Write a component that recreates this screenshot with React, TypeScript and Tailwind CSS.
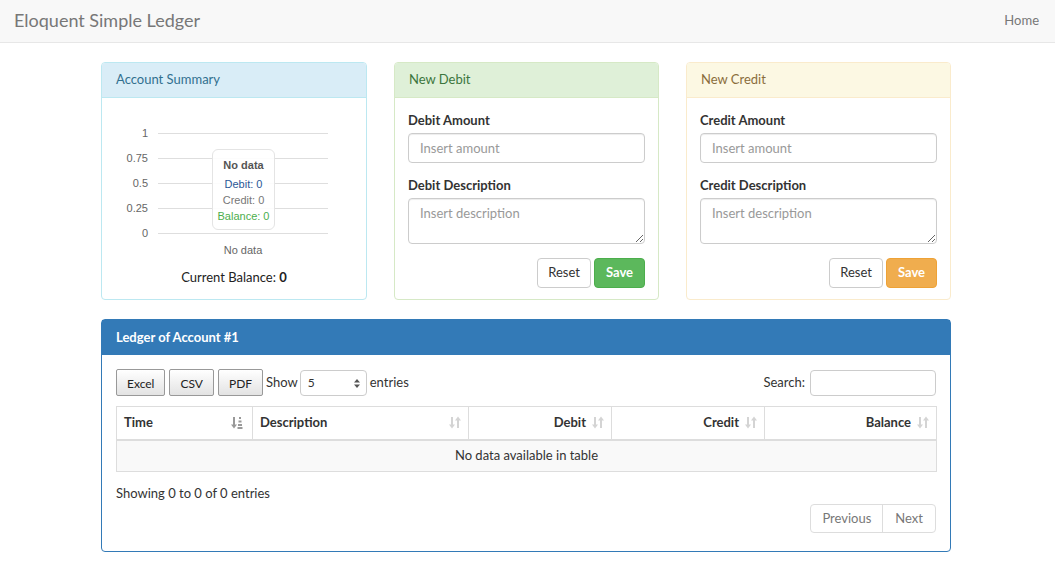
import React from "react";

const font = { fontFamily: "Lato, 'Open Sans', sans-serif" };

function SortBoth() {
  return (
    <svg width="12" height="13" viewBox="0 0 12 13" className="shrink-0">
      <g fill="#d4d4d4">
        <rect x="2" y="1" width="2" height="9" />
        <path d="M0 8.5 L6 8.5 L3 12.5 Z" />
        <rect x="8" y="3" width="2" height="9" />
        <path d="M6 4.5 L12 4.5 L9 0.5 Z" />
      </g>
    </svg>
  );
}

function SortAsc() {
  return (
    <svg width="13" height="13" viewBox="0 0 13 13" className="shrink-0">
      <g fill="#999">
        <rect x="2" y="1" width="2" height="9" />
        <path d="M0 8.5 L6 8.5 L3 12.5 Z" />
        <rect x="8" y="1" width="2" height="2" />
        <rect x="7.5" y="4.5" width="3" height="2" />
        <rect x="7" y="8" width="4" height="2" />
        <rect x="6.5" y="11" width="5" height="2" />
      </g>
    </svg>
  );
}

function SummaryChart() {
  const ticks = [
    { label: "1", y: 35 },
    { label: "0.75", y: 60 },
    { label: "0.5", y: 85 },
    { label: "0.25", y: 110 },
    { label: "0", y: 135 },
  ];
  return (
    <div className="relative h-[170px]">
      <svg width="264" height="170" className="block">
        {ticks.map((t) => (
          <g key={t.label}>
            <line x1="56" x2="226" y1={t.y + 0.5} y2={t.y + 0.5} stroke="#dedede" />
            <text
              x="46"
              y={t.y + 4}
              textAnchor="end"
              fontSize="11"
              fill="#666"
              fontFamily="'Liberation Sans', Arial, sans-serif"
            >
              {t.label}
            </text>
          </g>
        ))}
        <text
          x="141"
          y="156"
          textAnchor="middle"
          fontSize="11"
          fill="#666"
          fontFamily="'Liberation Sans', Arial, sans-serif"
        >
          No data
        </text>
      </svg>
      <div
        className="absolute left-[110px] top-[51px] w-[63px] h-[81px] rounded-[6px] border border-[#e4e4e4] bg-white/90 flex flex-col items-center pt-[7px] text-[11px] leading-[16px]"
        style={{ fontFamily: "'Liberation Sans', Arial, sans-serif" }}
      >
        <div className="font-bold text-[#555]">No data</div>
        <div className="text-[#2b5797] mt-[3px]">Debit: 0</div>
        <div className="text-[#777]">Credit: 0</div>
        <div className="text-[#4cae4c]">Balance: 0</div>
      </div>
    </div>
  );
}

function EntryPanel(props: {
  title: string;
  kind: "Debit" | "Credit";
  border: string;
  head: string;
  saveCls: string;
}) {
  return (
    <div className={"rounded-[4px] border bg-white h-[238px] flex flex-col " + props.border}>
      <div className={"h-[35px] border-b px-[14px] flex items-center text-[13px] rounded-t-[3px] " + props.head}>
        {props.title}
      </div>
      <div className="px-[13px] pt-[13px]">
        <label className="block font-bold text-[13px] leading-[18px] text-[#333] mb-[4px]">
          {props.kind} Amount
        </label>
        <input
          placeholder="Insert amount"
          className="w-full h-[30px] rounded-[4px] border border-[#ccc] px-[11px] text-[13px] placeholder:text-[#999] shadow-[inset_0_1px_1px_rgba(0,0,0,0.075)]"
        />
        <label className="block font-bold text-[13px] leading-[18px] text-[#333] mt-[13px] mb-[4px]">
          {props.kind} Description
        </label>
        <textarea
          placeholder="Insert description"
          className="block w-full h-[46px] rounded-[4px] border border-[#ccc] px-[11px] py-[5px] text-[13px] leading-[18px] placeholder:text-[#999] shadow-[inset_0_1px_1px_rgba(0,0,0,0.075)]"
        />
        <div className="flex justify-end gap-[3px] mt-[14px]">
          <button className="h-[30px] px-[10px] rounded-[4px] border border-[#ccc] bg-white text-[13px] text-[#333]">
            Reset
          </button>
          <button className={"h-[30px] px-[11px] rounded-[4px] border text-[13px] font-bold text-white " + props.saveCls}>
            Save
          </button>
        </div>
      </div>
    </div>
  );
}

export default function App() {
  const cols = [
    { name: "Time", w: "w-[136px]", align: "justify-between", icon: <SortAsc /> },
    { name: "Description", w: "w-[216px]", align: "justify-between", icon: <SortBoth /> },
    { name: "Debit", w: "w-[143px]", align: "justify-end", icon: <SortBoth /> },
    { name: "Credit", w: "w-[153px]", align: "justify-end", icon: <SortBoth /> },
    { name: "Balance", w: "w-[172px]", align: "justify-end", icon: <SortBoth /> },
  ];

  return (
    <div className="min-h-[575px] bg-white text-[13px] text-[#333]" style={font}>
      <nav className="h-[43px] bg-[#f8f8f8] border-b border-[#e7e7e7] flex items-center justify-between pl-[14px] pr-[16px] pb-[1px]">
        <span className="text-[18px] text-[#777]">Eloquent Simple Ledger</span>
        <span className="text-[13px] text-[#777]">Home</span>
      </nav>

      <div className="ml-[101px] w-[850px] pt-[19px]">
        <div className="grid grid-cols-[266px_265px_265px] gap-x-[27px]">
          <div className="rounded-[4px] border border-[#bce8f1] bg-white h-[238px] flex flex-col">
            <div className="h-[35px] border-b border-[#bce8f1] bg-[#d9edf7] text-[#31708f] px-[14px] flex items-center text-[13px] rounded-t-[3px]">
              Account Summary
            </div>
            <SummaryChart />
            <div className="text-center text-[13px] leading-[18px] text-[#222]">
              Current Balance: <b>0</b>
            </div>
          </div>

          <EntryPanel
            title="New Debit"
            kind="Debit"
            border="border-[#d6e9c6]"
            head="bg-[#dff0d8] border-[#d6e9c6] text-[#3c763d]"
            saveCls="bg-[#5cb85c] border-[#4cae4c]"
          />
          <EntryPanel
            title="New Credit"
            kind="Credit"
            border="border-[#faebcc]"
            head="bg-[#fcf8e3] border-[#faebcc] text-[#8a6d3b]"
            saveCls="bg-[#f0ad4e] border-[#eea236]"
          />
        </div>

        <div className="mt-[19px] rounded-[4px] border border-[#337ab7] bg-white">
          <div className="h-[35px] bg-[#337ab7] text-white font-bold px-[14px] flex items-center text-[13px]">
            Ledger of Account #1
          </div>
          <div className="px-[14px] pt-[14px] pb-[18px]">
            <div className="flex items-center justify-between h-[27px]">
              <div className="flex items-center">
                {["Excel", "CSV", "PDF"].map((b) => (
                  <button
                    key={b}
                    className="h-[27px] px-[10px] mr-[4px] rounded-[2px] border border-[#999] bg-gradient-to-b from-white to-[#e3e3e3] text-[12px] text-[#222] pt-[2px]"
                  >
                    {b}
                  </button>
                ))}
                <span className="-ml-[1px] mr-[2px]">Show</span>
                <div className="relative w-[67px] h-[26px] rounded-[4px] border border-[#ccc] bg-white flex items-center pl-[7px] text-[12px]">
                  5
                  <svg width="6" height="9" viewBox="0 0 6 9" className="absolute right-[6px] top-[8px]">
                    <path d="M0 3.5 L3 0 L6 3.5 Z M0 5.5 L3 9 L6 5.5 Z" fill="#555" />
                  </svg>
                </div>
                <span className="ml-[3px]">entries</span>
              </div>
              <div className="flex items-center">
                <span className="mr-[5px]">Search:</span>
                <input className="w-[126px] h-[26px] rounded-[4px] border border-[#ccc] px-[6px]" />
              </div>
            </div>

            <table className="mt-[10px] w-[821px] table-fixed border-collapse">
              <thead>
                <tr>
                  {cols.map((c) => (
                    <th key={c.name} className={"h-[33px] p-0 border border-[#ddd] border-b-2 px-[7px] font-bold text-[13px] text-[#333] " + c.w}>
                      <div className={"flex items-center gap-[6px] " + c.align}>
                        <span>{c.name}</span>
                        <span className={c.name === "Time" ? "mr-[1px]" : ""}>{c.icon}</span>
                      </div>
                    </th>
                  ))}
                </tr>
              </thead>
              <tbody>
                <tr>
                  <td colSpan={5} className="h-[32px] p-0 border border-[#ddd] bg-[#f9f9f9] text-center text-[13px] text-[#333]">
                    No data available in table
                  </td>
                </tr>
              </tbody>
            </table>

            <div className="mt-[12px] leading-[18px]">Showing 0 to 0 of 0 entries</div>

            <div className="flex justify-end mt-[2px]">
              <div className="flex h-[29px] rounded-[4px] border border-[#ddd] text-[#777] text-[13px]">
                <span className="px-[11px] flex items-center border-r border-[#ddd]">Previous</span>
                <span className="px-[12px] flex items-center">Next</span>
              </div>
            </div>
          </div>
        </div>
      </div>
    </div>
  );
}
